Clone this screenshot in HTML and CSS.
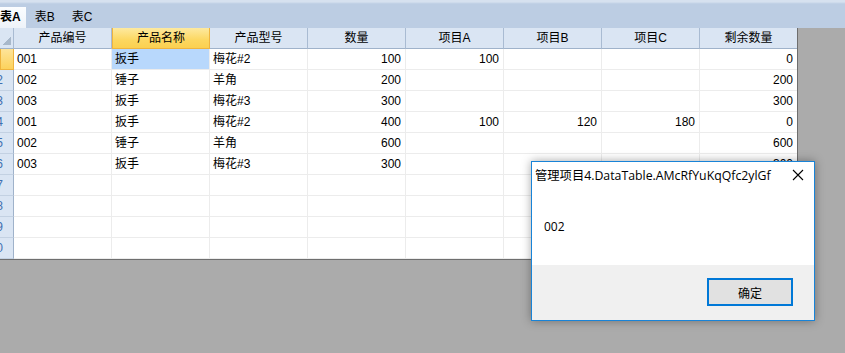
FILE: index.html
```html
<!DOCTYPE html>
<html>
<head>
  <title>表A</title>
  <link rel="stylesheet" href="styles.css">
</head>
<body>
  <div class="tabs">
    <span class="tab active">表A</span>
    <span class="tab">表B</span>
    <span class="tab">表C</span>
  </div>

  <div class="grid">
    <div class="row head">
      <div class="corner"></div>
      <div>产品编号</div>
      <div class="sel">产品名称</div>
      <div>产品型号</div>
      <div>数量</div>
      <div>项目A</div>
      <div>项目B</div>
      <div>项目C</div>
      <div>剩余数量</div>
    </div>
    <div class="row">
      <div class="rh cur"><span>1</span></div>
      <div>001</div><div class="selcell">扳手</div><div>梅花#2</div><div class="num">100</div>
      <div class="num">100</div><div></div><div></div><div class="num">0</div>
    </div>
    <div class="row">
      <div class="rh"><span>2</span></div>
      <div>002</div><div>锤子</div><div>羊角</div><div class="num">200</div>
      <div></div><div></div><div></div><div class="num">200</div>
    </div>
    <div class="row">
      <div class="rh"><span>3</span></div>
      <div>003</div><div>扳手</div><div>梅花#3</div><div class="num">300</div>
      <div></div><div></div><div></div><div class="num">300</div>
    </div>
    <div class="row">
      <div class="rh"><span>4</span></div>
      <div>001</div><div>扳手</div><div>梅花#2</div><div class="num">400</div>
      <div class="num">100</div><div class="num">120</div><div class="num">180</div><div class="num">0</div>
    </div>
    <div class="row">
      <div class="rh"><span>5</span></div>
      <div>002</div><div>锤子</div><div>羊角</div><div class="num">600</div>
      <div></div><div></div><div></div><div class="num">600</div>
    </div>
    <div class="row">
      <div class="rh"><span>6</span></div>
      <div>003</div><div>扳手</div><div>梅花#3</div><div class="num">300</div>
      <div></div><div></div><div></div><div class="num">300</div>
    </div>
    <div class="row">
      <div class="rh"><span>7</span></div>
      <div></div><div></div><div></div><div></div><div></div><div></div><div></div><div></div>
    </div>
    <div class="row">
      <div class="rh"><span>8</span></div>
      <div></div><div></div><div></div><div></div><div></div><div></div><div></div><div></div>
    </div>
    <div class="row">
      <div class="rh"><span>9</span></div>
      <div></div><div></div><div></div><div></div><div></div><div></div><div></div><div></div>
    </div>
    <div class="row">
      <div class="rh"><span>10</span></div>
      <div></div><div></div><div></div><div></div><div></div><div></div><div></div><div></div>
    </div>
  </div>

  <div class="dialog">
    <div class="dlgTitle">
      <span>管理项目4.DataTable.AMcRfYuKqQfc2ylGf</span>
      <svg class="closeX" width="12" height="12" viewBox="0 0 12 12">
        <path d="M1 1 L11 11 M11 1 L1 11" stroke="#000" stroke-width="1.1" fill="none"/>
      </svg>
    </div>
    <div class="dlgBody">002</div>
    <div class="dlgFoot">
      <button class="okBtn">确定</button>
    </div>
  </div>
</body>
</html>
```

FILE: styles.css
```css
body {
  margin: 0;
  background-color: #ababab;
  font-family: "Liberation Sans", "Noto Sans CJK SC", sans-serif;
  font-size: 12px;
  color: #000;
}

/* tab strip */
.tabs {
  height: 28px;
  background: linear-gradient(#d6e1ef 0px, #d6e1ef 2px, #c6d5e8 3px, #bccde3 4px);
  display: flex;
  align-items: flex-end;
  box-sizing: border-box;
}

.tab {
  height: 21px;
  line-height: 21px;
  padding: 0 8px 0 9px;
  box-sizing: border-box;
}

.tab.active {
  margin-left: -2px;
  padding: 0 5px 0 2px;
  font-weight: bold;
  background: linear-gradient(#fbfdff, #eef3f9);
}

/* grid */
.grid {
  width: 798px;
  background-color: #fff;
  border-right: 1px solid #6e6e6e;
  border-bottom: 1px solid #6e6e6e;
  box-sizing: border-box;
}

.row {
  display: grid;
  grid-template-columns: 14px repeat(7, 98px) 97px;
  height: 21px;
}

.row > div {
  box-sizing: border-box;
  border-right: 1px solid #ececec;
  border-bottom: 1px solid #ececec;
  padding: 0 3px;
  line-height: 20px;
  white-space: nowrap;
  overflow: hidden;
}

.row > div:last-child {
  border-right: none;
}

.row .num {
  text-align: right;
  padding-right: 4px;
}

.row .selcell {
  background-color: #b8d8fc;
}

.head > div {
  background-color: #dae5f3;
  border-right: 1px solid #a9bbd2;
  border-bottom: 1px solid #9fb2ca;
  text-align: center;
  line-height: 21px;
}

.head .sel {
  background: linear-gradient(#fde9a0, #fcd760 60%, #fbd050);
  border: 1px solid #efb43e;
  border-top: none;
}

.head .corner {
  padding: 0;
  background:
    linear-gradient(135deg, transparent 50%, #a8b8ca 50%) right 2px bottom 3px / 9px 9px no-repeat,
    #dae5f3;
}

.row .rh {
  padding: 0 10px 0 0;
  background-color: #dae5f3;
  border-right: 1px solid #9fb2ca;
  border-bottom: 1px solid #c3d1e2;
  color: #3e6fb0;
  display: flex;
  justify-content: flex-end;
}

.row .rh.cur {
  background: linear-gradient(#fee49a, #fcd25c);
  border: 1px solid #efb43e;
  border-top: none;
}

.row .rh.cur span {
  visibility: hidden;
}

/* message box */
.dialog {
  position: absolute;
  left: 531px;
  top: 161px;
  width: 284px;
  height: 160px;
  box-sizing: border-box;
  border: 1px solid #1883d7;
  background-color: #fff;
  box-shadow: 0 0 9px rgba(0, 0, 0, 0.35);
  font-family: "Open Sans", "Noto Sans CJK SC", sans-serif;
  display: flex;
  flex-direction: column;
}

.dlgTitle {
  height: 26px;
  padding: 0 0 0 3px;
  display: flex;
  justify-content: space-between;
  align-items: center;
  font-size: 12.3px;
}

.closeX {
  margin-right: 10px;
}

.dlgBody {
  flex: 1;
  padding: 30px 0 0 12px;
  font-size: 12px;
}

.dlgFoot {
  height: 55px;
  background-color: #f0f0f0;
  display: flex;
  justify-content: flex-end;
  align-items: flex-start;
  padding: 13px 21px 0 0;
  box-sizing: border-box;
}

.okBtn {
  width: 86px;
  height: 28px;
  border: 2px solid #0078d7;
  background-color: #e1e1e1;
  font-family: "Noto Sans CJK SC", sans-serif;
  font-size: 12px;
  padding: 0;
}
```
